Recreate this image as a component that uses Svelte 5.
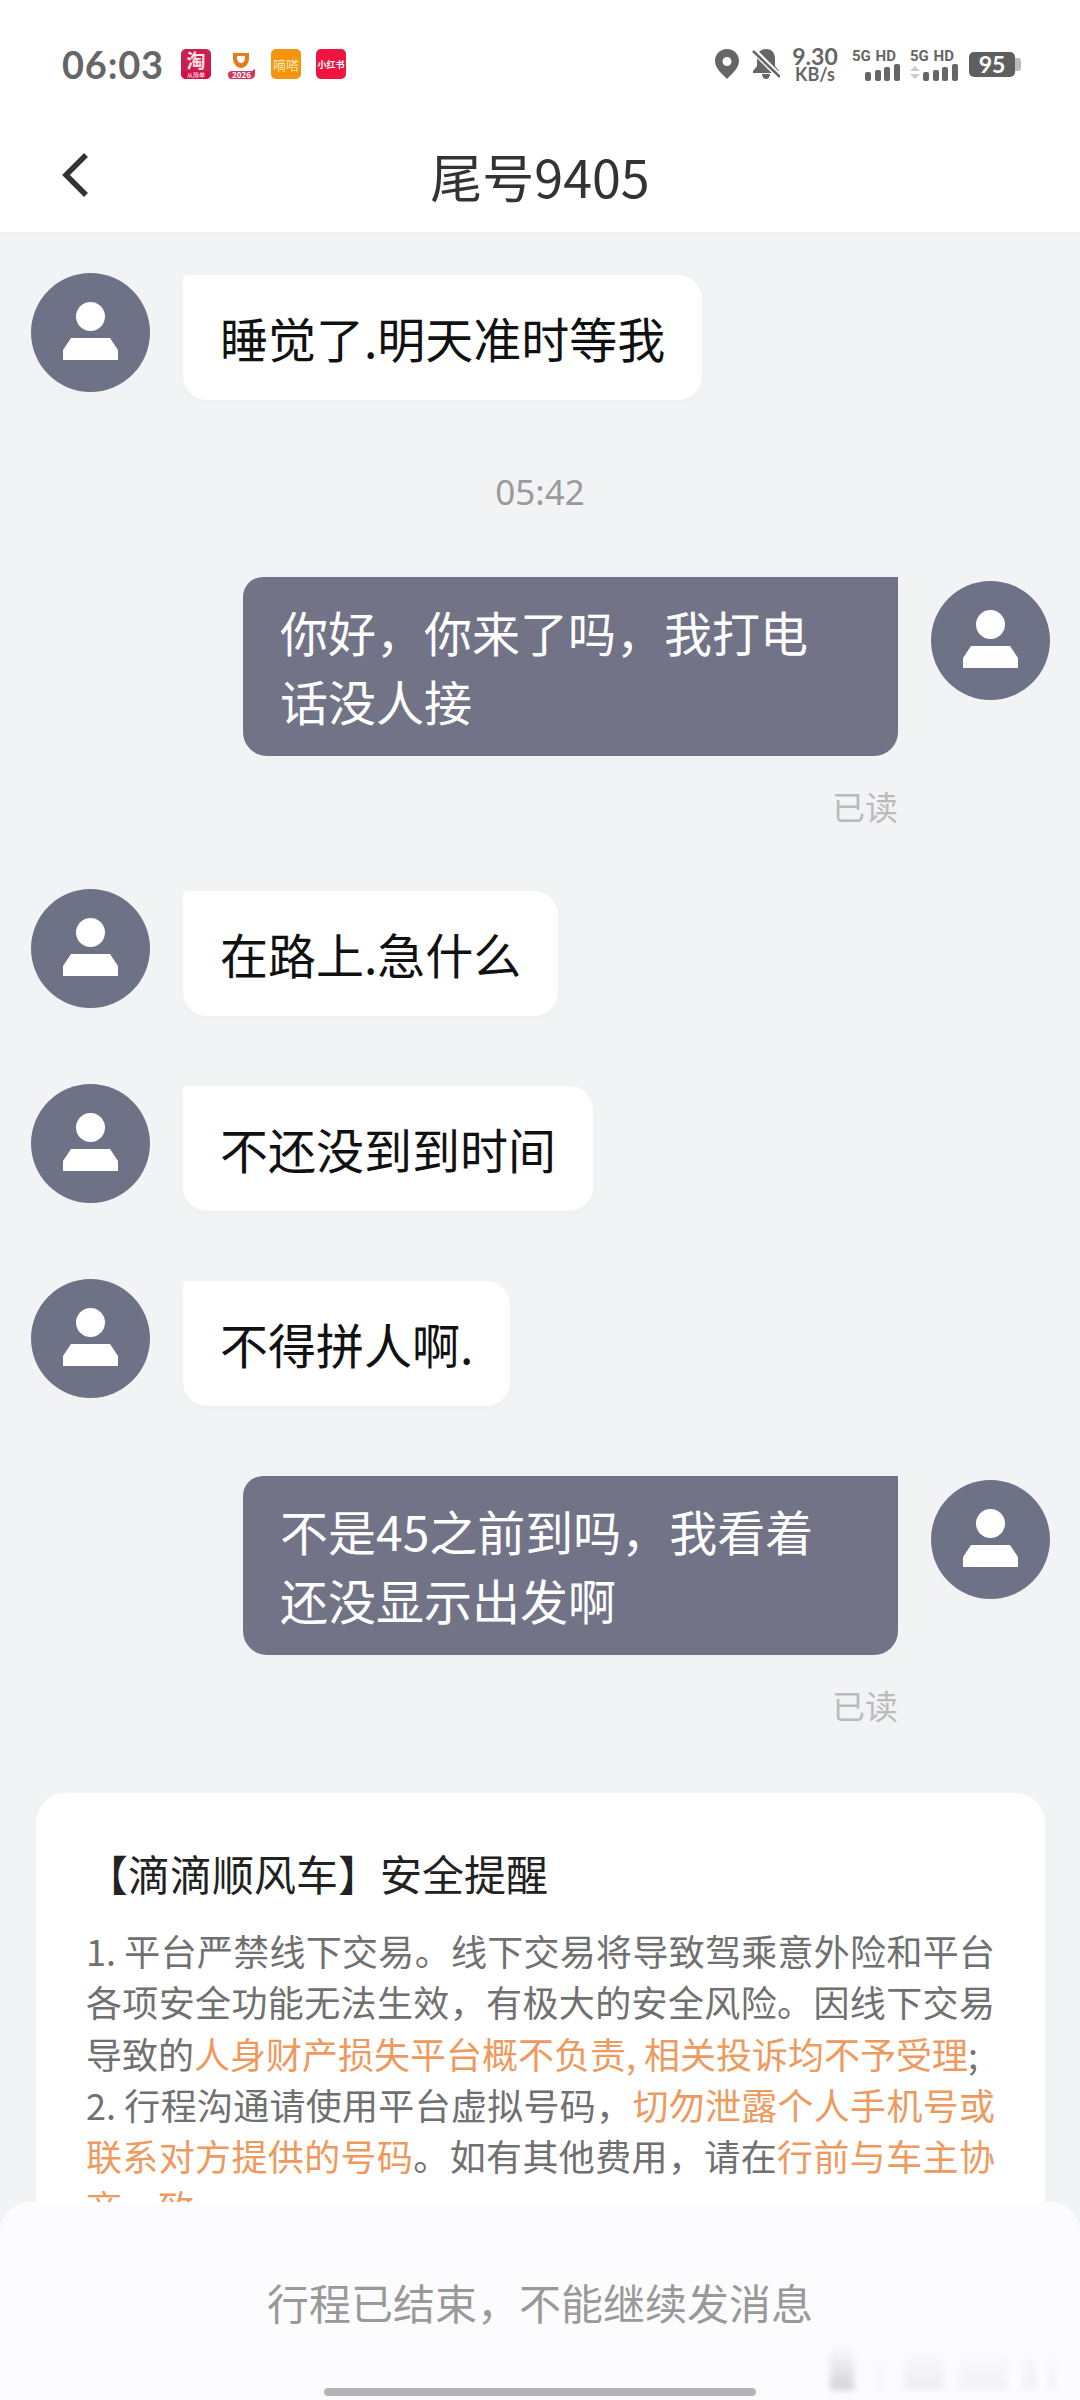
<script>

    // chat rows, top to bottom
    const messages = [
        { side: 'in', text: '睡觉了.明天准时等我', after: 'time' },
        { side: 'out', text: '你好，你来了吗，我打电话没人接', read: true },
        { side: 'in', text: '在路上.急什么' },
        { side: 'in', text: '不还没到到时间' },
        { side: 'in', text: '不得拼人啊.' },
        { side: 'out', text: '不是45之前到吗，我看着还没显示出发啊', read: true }
    ];

    // faint smudges in the bottom right corner
    const smudges = [
        { w: 24, gap: 22, a: 0.16 },
        { w: 8, gap: 20, a: 0.03 },
        { w: 40, gap: 14, a: 0.06 },
        { w: 50, gap: 14, a: 0.04 },
        { w: 14, gap: 12, a: 0.05 },
        { w: 8, gap: 0, a: 0.04 }
    ];

</script>

{#snippet avatar()}
    <svg class="avatar" viewBox="0 0 119 119">
        <circle cx="59.5" cy="59.5" r="59.5" fill="#6e7286" />
        <circle cx="59.5" cy="43.5" r="14.5" fill="#fff" />
        <path d="M32 87V77L40 65H79L87 77V87Z" fill="#fff" />
    </svg>
{/snippet}

<div class="screen">

    <header class="top">
        <div class="status">
            <span class="clock">06:03</span>

            <div class="apps">
                <div class="app taobao">
                    <span class="tao">淘</span>
                    <span class="tao-band">从简单</span>
                </div>
                <div class="app didi">
                    <svg viewBox="0 0 30 30">
                        <path d="M7 4H23V9C23 15 19 19 15 19C11 19 7 15 7 9Z" fill="#e8791e" />
                        <path d="M11 7H19V9C19 12 17 14 15 14C13 14 11 12 11 9Z" fill="#fff" />
                        <path d="M2 25C2 23 4 22 6 22H26L29 20V25C29 28 27 30 25 30H5C3 30 2 28 2 25Z" fill="#d4355a" />
                    </svg>
                    <span class="didi-year">2026</span>
                </div>
                <div class="app dida">嘀嗒</div>
                <div class="app xhs">小红书</div>
            </div>

            <div class="spacer"></div>

            <svg class="pin" viewBox="0 0 24 30">
                <path fill-rule="evenodd" d="M12 0C5 0 0 5 0 12C0 19 7 25 12 30C17 25 24 19 24 12C24 5 19 0 12 0ZM12 8A4.5 4.5 0 1 1 12 17A4.5 4.5 0 1 1 12 8Z" fill="#666" />
            </svg>

            <svg class="bell" viewBox="0 0 28 30">
                <path d="M14 0C8 0 5 4 5 10V17L1 22V24H27V22L23 17V10C23 4 20 0 14 0Z" fill="#666" />
                <path d="M10 25C10 28 12 30 14 30C16 30 18 28 18 25Z" fill="#666" />
                <path d="M1 1L28 28" stroke="#fff" stroke-width="6" />
                <path d="M1 2L28 28" stroke="#666" stroke-width="2.5" />
            </svg>

            <div class="speed">
                <span class="speed-num">9.30</span>
                <span class="speed-unit">KB/s</span>
            </div>

            <div class="sim">
                <span class="sim-label">5G HD</span>
                <svg class="bars" viewBox="0 0 48 17">
                    <rect x="13" y="8" width="6" height="9" rx="2" fill="#666" />
                    <rect x="23" y="6" width="6" height="11" rx="2" fill="#666" />
                    <rect x="32" y="3" width="6" height="14" rx="2" fill="#666" />
                    <rect x="42" y="0" width="6" height="17" rx="2" fill="#666" />
                </svg>
            </div>

            <div class="sim">
                <span class="sim-label">5G HD</span>
                <svg class="bars" viewBox="0 0 48 17">
                    <path d="M0 7L5 2L10 7Z M0 10L5 15L10 10Z" fill="#ccc" />
                    <rect x="13" y="8" width="6" height="9" rx="2" fill="#666" />
                    <rect x="23" y="6" width="6" height="11" rx="2" fill="#666" />
                    <rect x="32" y="3" width="6" height="14" rx="2" fill="#666" />
                    <rect x="42" y="0" width="6" height="17" rx="2" fill="#666" />
                </svg>
            </div>

            <div class="battery">
                <span class="battery-body">95</span>
                <span class="battery-cap"></span>
            </div>
        </div>

        <nav class="nav">
            <svg class="back" viewBox="0 0 27 46">
                <path d="M24 3L4 23L24 43" fill="none" stroke="#333" stroke-width="5.5" />
            </svg>
            <h1 class="title">尾号9405</h1>
            <span></span>
        </nav>
    </header>

    <main class="chat">
        {#each messages as m}
            {#if m.side === 'in'}
                <div class="row row-in">
                    {@render avatar()}
                    <div class="bubble bubble-in">{m.text}</div>
                </div>
            {:else}
                <div class="row row-out">
                    <div class="bubble bubble-out">{m.text}</div>
                    {@render avatar()}
                </div>
                <div class="read">已读</div>
            {/if}
            {#if m.after === 'time'}
                <div class="time">05:42</div>
            {/if}
        {/each}

        <section class="card">
            <h2 class="card-title">【滴滴顺风车】安全提醒</h2>
            <p class="card-body">1. 平台严禁线下交易。线下交易将导致驾乘意外险和平台各项安全功能无法生效，有极大的安全风险。因线下交易导致的<em>人身财产损失平台概不负责, 相关投诉均不予受理</em>;<br />2. 行程沟通请使用平台虚拟号码，<em>切勿泄露个人手机号或联系对方提供的号码</em>。如有其他费用，请在<em>行前与车主协商一致</em>。</p>
        </section>
    </main>

    <footer class="ended">
        <span>行程已结束，不能继续发消息</span>
        <div class="smudges">
            {#each smudges as s}
                <i style="width: {s.w}px; margin-right: {s.gap}px; opacity: {s.a / 0.16}"></i>
            {/each}
        </div>
        <div class="home-bar"></div>
    </footer>

</div>

<style>

    :global(body) {
        margin: 0;
        background: #f2f3f5;
    }

    .screen {
        position: relative;
        width: 1080px;
        height: 2400px;
        overflow: hidden;
        background: #f2f3f5;
        font-family: "Noto Sans CJK SC", "Noto Sans", sans-serif;
    }

    /* header */

    .top {
        background: #fff;
        box-shadow: 0 1px 4px rgba(0, 0, 0, 0.04);
    }

    .status {
        display: flex;
        align-items: center;
        height: 128px;
        padding: 0 59px 0 62px;
        box-sizing: border-box;
        color: #666;
    }

    .clock {
        font-family: Lato, sans-serif;
        font-size: 38px;
        font-weight: 700;
        letter-spacing: 0.8px;
        width: 119px;
    }

    .apps {
        display: flex;
        gap: 15px;
    }

    .app {
        position: relative;
        display: flex;
        align-items: center;
        justify-content: center;
        width: 30px;
        height: 30px;
        border-radius: 5px;
        overflow: hidden;
    }

    .taobao {
        background: #c91f52;
        flex-direction: column;
        justify-content: flex-start;
    }

    .tao {
        color: #fde3e3;
        font-size: 19px;
        line-height: 22px;
        font-weight: 700;
    }

    .tao-band {
        width: 100%;
        height: 8px;
        background: #d3103f;
        color: #fff;
        font-size: 6px;
        line-height: 8px;
        text-align: center;
    }

    .didi {
        background: #fff;
    }

    .didi svg {
        width: 30px;
        height: 30px;
    }

    .didi-year {
        position: absolute;
        left: 6px;
        bottom: 0;
        font-size: 8px;
        line-height: 9px;
        font-weight: 700;
        color: #fff;
    }

    .dida {
        background: #f5940e;
        color: #fde9b0;
        font-size: 13px;
    }

    .xhs {
        background: #ee1540;
        color: #fff;
        font-size: 9px;
        font-weight: 700;
    }

    .spacer {
        flex: 1;
    }

    .pin {
        width: 24px;
        height: 30px;
        margin-right: 13px;
    }

    .bell {
        width: 28px;
        height: 30px;
        margin-right: 12px;
    }

    .speed {
        display: flex;
        flex-direction: column;
        align-items: center;
        width: 46px;
        margin-right: 14px;
        font-family: Lato, sans-serif;
        font-weight: 700;
    }

    .speed-num {
        font-size: 23px;
        line-height: 20px;
    }

    .speed-unit {
        font-size: 18px;
        line-height: 17px;
    }

    .sim {
        display: flex;
        flex-direction: column;
        width: 48px;
        margin-right: 10px;
    }

    .sim-label {
        font-family: Roboto, sans-serif;
        font-size: 15px;
        font-weight: 700;
        line-height: 16px;
        white-space: nowrap;
        word-spacing: 1px;
    }

    .bars {
        width: 48px;
        height: 17px;
    }

    .battery {
        display: flex;
        align-items: center;
        margin-left: 1px;
    }

    .battery-body {
        width: 46px;
        height: 25px;
        border-radius: 5px;
        background: #5f5f5f;
        color: #fff;
        font-family: Lato, sans-serif;
        font-size: 23px;
        font-weight: 700;
        line-height: 25px;
        text-align: center;
    }

    .battery-cap {
        width: 6px;
        height: 13px;
        border-radius: 0 3px 3px 0;
        background: #bbb;
    }

    .nav {
        display: grid;
        grid-template-columns: 1fr auto 1fr;
        align-items: center;
        height: 104px;
        padding: 0 62px 10px;
        box-sizing: border-box;
    }

    .back {
        width: 27px;
        height: 46px;
    }

    .title {
        margin: 0;
        font-family: "Noto Sans CJK SC", sans-serif;
        font-size: 52px;
        font-weight: 400;
        color: #333;
    }

    /* chat */

    .chat {
        display: flex;
        flex-direction: column;
        padding-top: 43px;
    }

    .row {
        display: flex;
        margin-bottom: 70px;
    }

    .row-in {
        padding-left: 31px;
        gap: 33px;
    }

    .row-out {
        justify-content: flex-end;
        padding-right: 30px;
        gap: 33px;
        margin-bottom: 27px;
    }

    .avatar {
        flex: none;
        width: 119px;
        height: 119px;
    }

    .row-in .avatar {
        margin-top: -2px;
    }

    .row-out .avatar {
        margin-top: 4px;
    }

    .bubble {
        box-sizing: border-box;
        font-size: 48px;
        line-height: 69px;
    }

    .bubble-in {
        padding: 28px 37px;
        background: #fff;
        color: #111;
        border-radius: 4px 24px 24px 24px;
        box-shadow: 0 3px 8px rgba(0, 0, 0, 0.02);
    }

    .bubble-out {
        width: 655px;
        padding: 20px 60px 21px 37px;
        background: #727387;
        color: #fff;
        border-radius: 20px 0 24px 24px;
    }

    .time {
        margin: -1px 0 62px;
        height: 46px;
        font-size: 35px;
        line-height: 46px;
        text-align: center;
        color: #9a9a9a;
        font-family: "Noto Sans", sans-serif;
    }

    .read {
        height: 46px;
        margin: 0 182px 62px 0;
        font-size: 33px;
        line-height: 46px;
        text-align: right;
        color: #bbb;
    }

    .read:has(+ .card) {
        margin-bottom: 65px;
    }

    .card {
        margin: 0 35px 0 36px;
        padding: 50px;
        background: #fff;
        border-radius: 30px;
    }

    .card-title {
        margin: 0 0 22px;
        font-size: 42px;
        font-weight: 400;
        line-height: 60px;
        color: #222;
    }

    .card-body {
        margin: 0;
        font-size: 36px;
        line-height: 51.3px;
        color: #707070;
        text-align: justify;
    }

    .card-body em {
        font-style: normal;
        color: #ee9a5e;
    }

    /* bottom bar */

    .ended {
        position: absolute;
        left: 0;
        right: 0;
        bottom: 0;
        height: 198px;
        display: flex;
        justify-content: center;
        padding-top: 70px;
        box-sizing: border-box;
        background: #fcfcfe;
        border-radius: 30px 30px 0 0;
        font-size: 42px;
        line-height: 60px;
        color: #999;
    }

    .ended::before {
        content: "";
        position: absolute;
        left: 0;
        right: 0;
        top: -32px;
        height: 62px;
        background: linear-gradient(rgba(0, 0, 0, 0), rgba(0, 0, 0, 0.07));
        z-index: -1;
    }

    .smudges {
        position: absolute;
        left: 830px;
        right: 5px;
        bottom: 10px;
        height: 45px;
        display: flex;
    }

    .smudges i {
        background: linear-gradient(rgba(0, 0, 0, 0), rgba(0, 0, 0, 0.16));
        filter: blur(3px);
    }

    .home-bar {
        position: absolute;
        left: 324px;
        width: 432px;
        bottom: 4px;
        height: 8px;
        border-radius: 4px;
        background: #b4b4b4;
    }

</style>
